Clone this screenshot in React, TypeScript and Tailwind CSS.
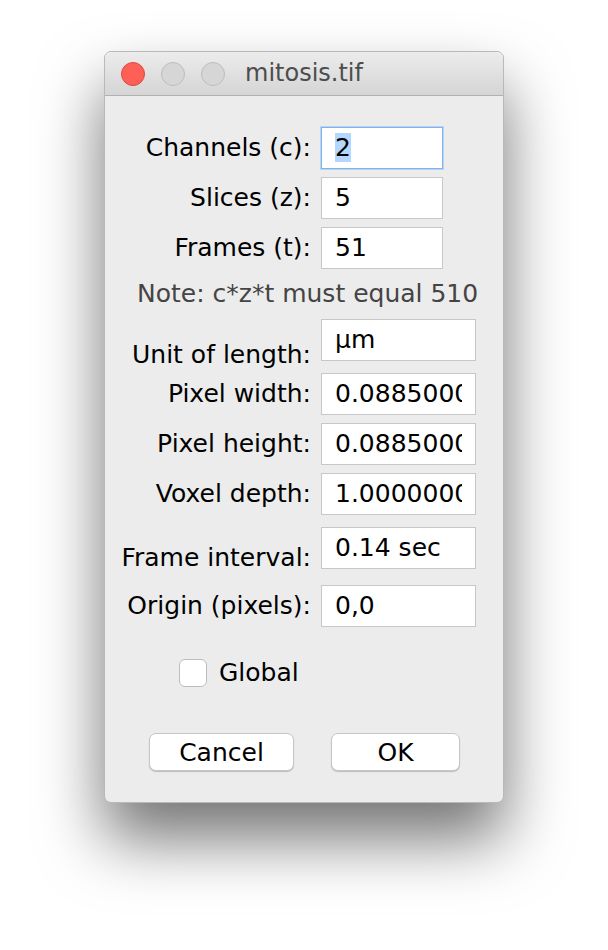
const font = "font-['DejaVu_Sans',sans-serif]";

function Field({
  value,
  width,
  focused,
  selected,
}: {
  value: string;
  width: string;
  focused?: boolean;
  selected?: boolean;
}) {
  return (
    <div
      className={`${width} h-[42px] shrink-0 bg-white flex items-center pl-[13px] pr-[13px] border ${
        focused ? "border-[#80b3ea] shadow-[0_0_0_1px_#b9d5f4]" : "border-[#c7c7c7]"
      }`}
    >
      <div className="overflow-hidden whitespace-nowrap text-[25px] text-black leading-[30px]">
        {selected ? <span className="bg-[#b3d7ff]">{value}</span> : value}
      </div>
    </div>
  );
}

function Row({
  label,
  value,
  width,
  align = "items-center",
  labelPad = "",
  className = "",
  focused,
  selected,
}: {
  label: string;
  value: string;
  width: string;
  align?: string;
  labelPad?: string;
  className?: string;
  focused?: boolean;
  selected?: boolean;
}) {
  return (
    <div className={`flex ${align} ${className}`}>
      <div className={`w-[206px] text-right text-[25px] text-black leading-[30px] whitespace-nowrap ${labelPad}`}>
        {label}
      </div>
      <div className="ml-[10px]">
        <Field value={value} width={width} focused={focused} selected={selected} />
      </div>
    </div>
  );
}

export default function App() {
  return (
    <div className={`min-h-[950px] bg-white pt-[51px] pl-[104px] ${font}`}>
      <div className="w-[400px] h-[752px] rounded-[7px] border border-[#b9b9b9] bg-[#ececec] overflow-hidden shadow-[0_36px_64px_rgba(0,0,0,0.55)] flex flex-col">
        {/* Title bar */}
        <div className="h-[44px] shrink-0 flex items-center bg-gradient-to-b from-[#ececec] to-[#d5d5d5] border-b border-[#b1b1b1] pl-[16px]">
          <span className="w-[24px] h-[24px] rounded-full bg-[#fe5f57] border border-[#e2463f]" />
          <span className="ml-[16px] w-[24px] h-[24px] rounded-full bg-[#d6d6d6] border border-[#bdbdbd]" />
          <span className="ml-[16px] w-[24px] h-[24px] rounded-full bg-[#d6d6d6] border border-[#bdbdbd]" />
          <span className="ml-[20px] text-[24px] text-[#4d4d4d] leading-none pb-[1px]">mitosis.tif</span>
        </div>

        {/* Body */}
        <div className="flex flex-col pt-[31px]">
          <Row label="Channels (c):" value="2" width="w-[122px]" focused selected />
          <Row label="Slices (z):" value="5" width="w-[122px]" className="mt-[8px]" />
          <Row label="Frames (t):" value="51" width="w-[122px]" className="mt-[8px]" />

          <div className="mt-[10px] pl-[32px] text-[25px] text-[#444444] leading-[30px] whitespace-nowrap">
            Note: c*z*t must equal 510
          </div>

          <Row
            label="Unit of length:"
            value="µm"
            width="w-[155px]"
            align="items-end"
            labelPad="translate-y-[9px]"
            className="mt-[10px]"
          />
          <Row label="Pixel width:" value="0.08850000" width="w-[155px]" className="mt-[12px]" />
          <Row label="Pixel height:" value="0.08850000" width="w-[155px]" className="mt-[8px]" />
          <Row label="Voxel depth:" value="1.00000000" width="w-[155px]" className="mt-[8px]" />
          <Row
            label="Frame interval:"
            value="0.14 sec"
            width="w-[155px]"
            align="items-end"
            labelPad="translate-y-[4px]"
            className="mt-[12px]"
          />
          <Row label="Origin (pixels):" value="0,0" width="w-[155px]" className="mt-[16px]" />

          {/* Checkbox */}
          <div className="mt-[31px] pl-[74px] flex items-center">
            <span className="w-[28px] h-[28px] rounded-[6px] bg-white border border-[#bdbdbd]" />
            <span className="ml-[12px] text-[25px] text-black leading-[30px]">Global</span>
          </div>

          {/* Buttons */}
          <div className="mt-[45px] pl-[44px] flex">
            <button className="w-[145px] h-[38px] rounded-[7px] bg-white border border-[#c6c6c6] shadow-[0_1px_1px_rgba(0,0,0,0.2)] text-[25px] text-black leading-none">
              Cancel
            </button>
            <button className="ml-[37px] w-[129px] h-[38px] rounded-[7px] bg-white border border-[#c6c6c6] shadow-[0_1px_1px_rgba(0,0,0,0.2)] text-[25px] text-black leading-none">
              OK
            </button>
          </div>
        </div>
      </div>
    </div>
  );
}
